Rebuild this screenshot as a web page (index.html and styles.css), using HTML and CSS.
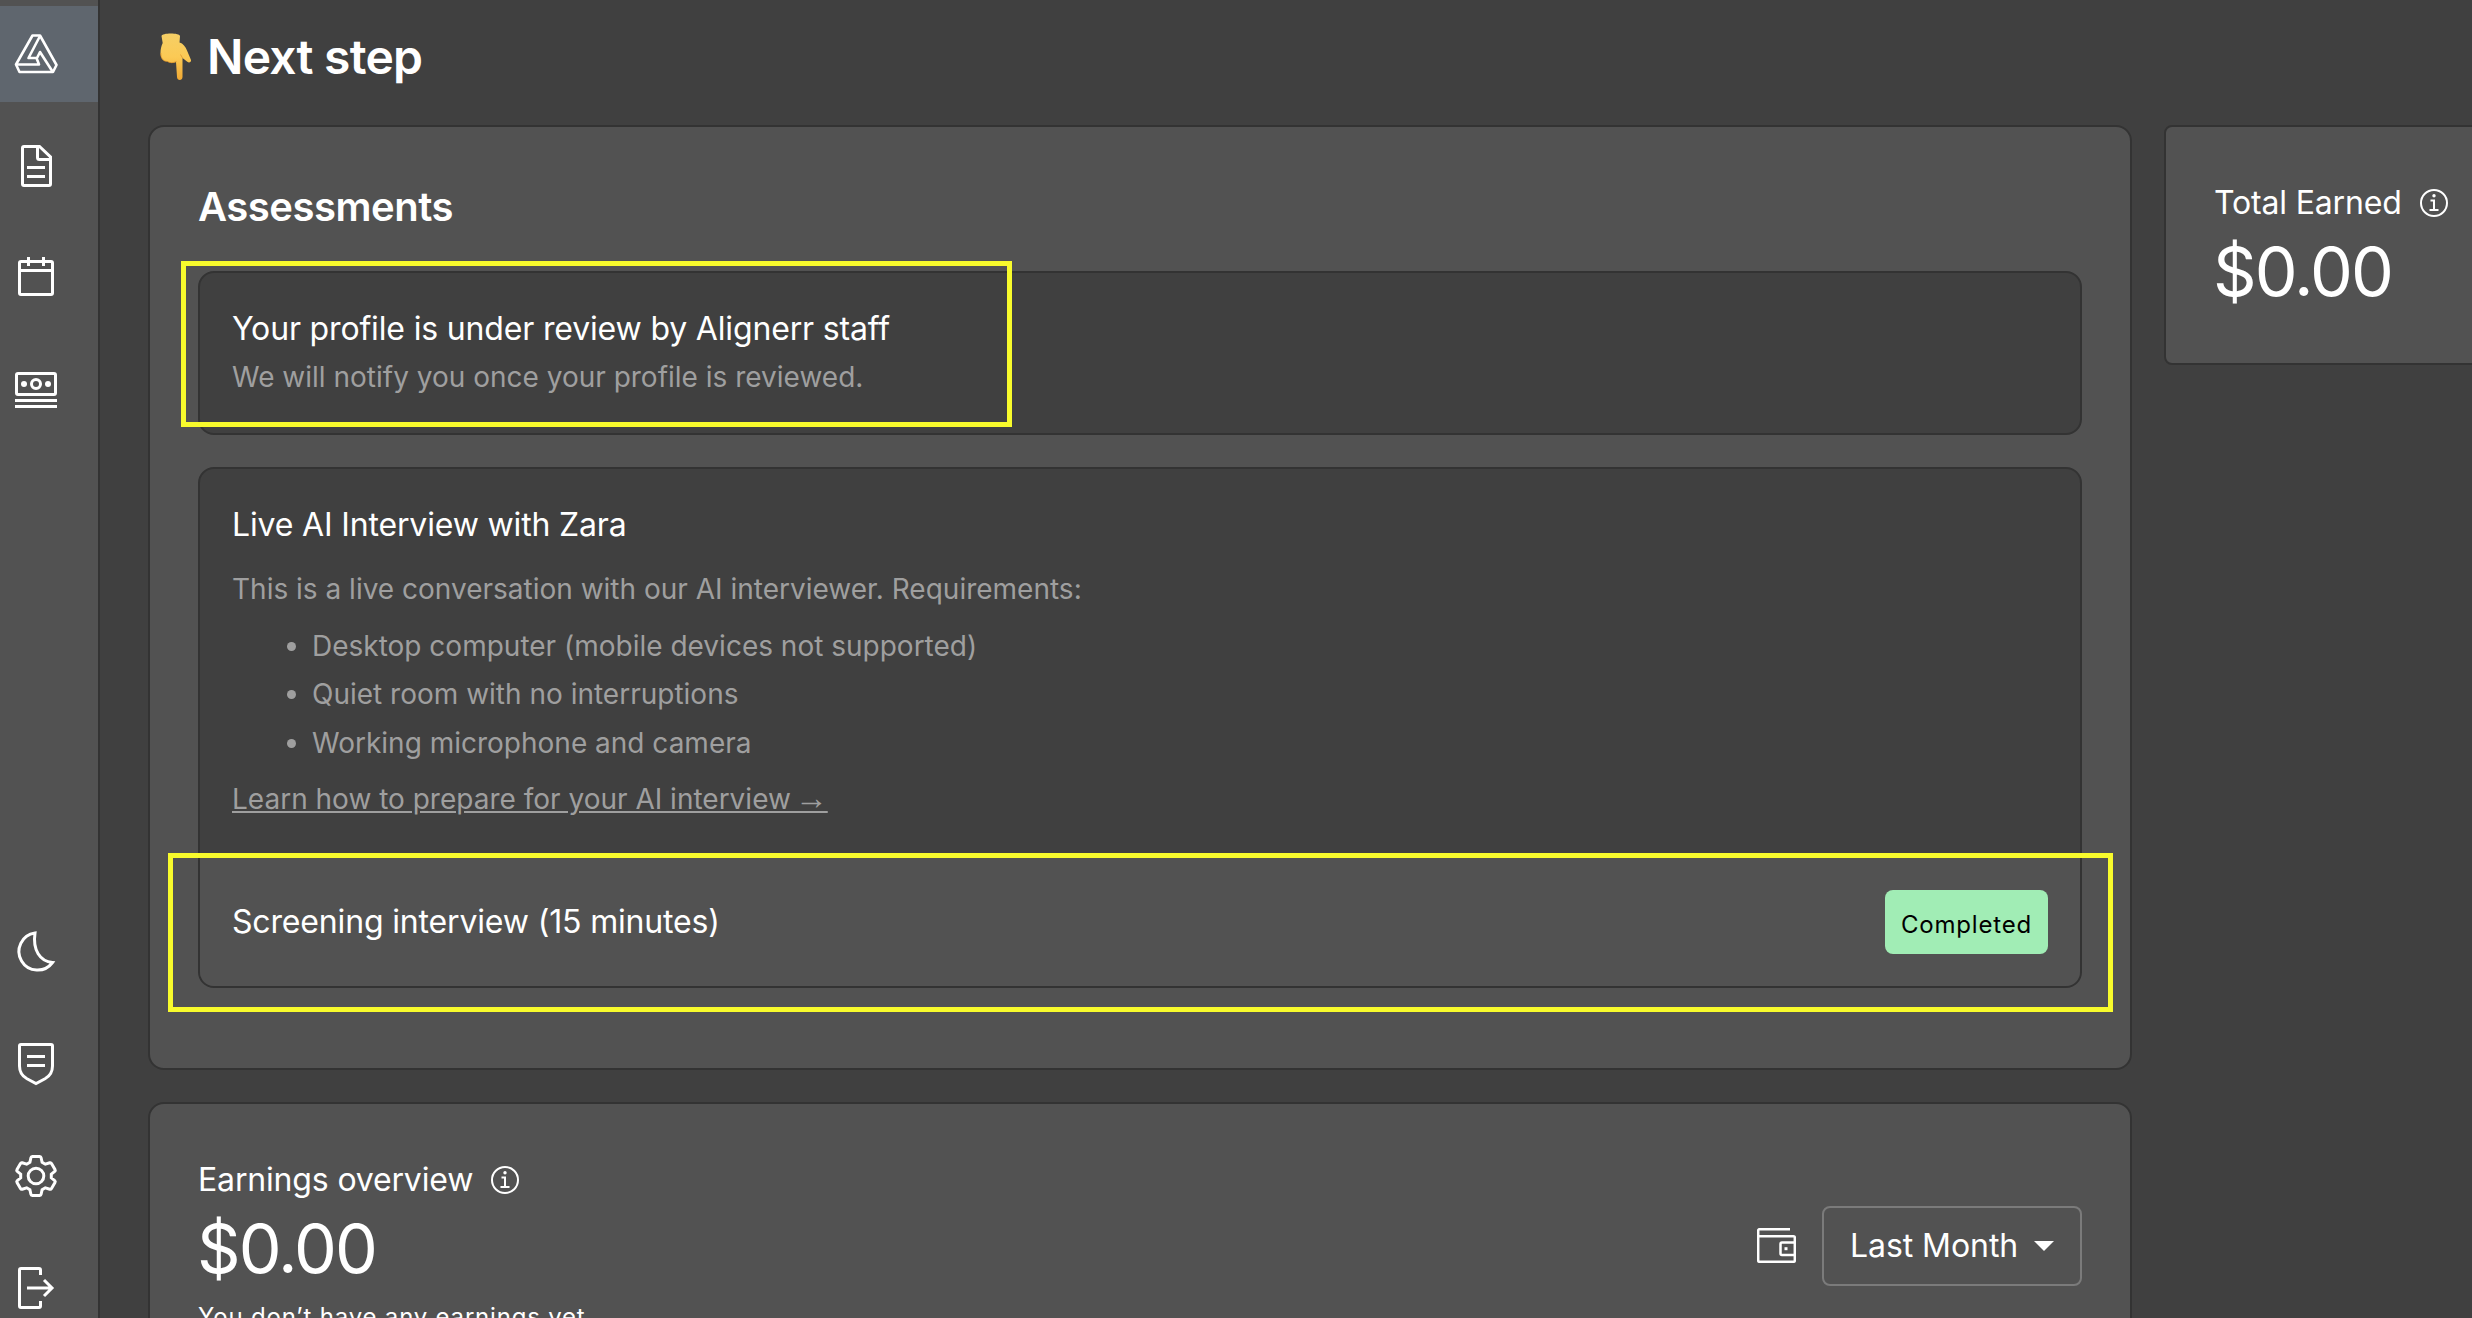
FILE: index.html
```
<!DOCTYPE html>
<html lang="en">
<head>
    <meta charset="UTF-8">
    <meta name="viewport" content="width=device-width, initial-scale=1.0">
    <title>Dashboard</title>
    <link rel="stylesheet" href="styles.css">
</head>
<body>

    <div class="app">
        <nav class="sidebar">
            <div class="nav-group">
                <a class="nav-item active">
                    <svg class="icon logo" viewBox="0 0 48 48">
                        <path d="M20.500 5.500h7.500L44.500 35l-3.500 7H7.500L4 34.500z" />
                        <path d="M28 6L16.500 28H25l3-6L40.500 41.500M4.500 34.500h22.500l-2.500-6.500" />
                    </svg>
                </a>
                <a class="nav-item">
                    <svg class="icon" viewBox="0 0 48 48">
                        <path d="M12 4.500h15.500l11 10.500v27a1.500 1.500 0 0 1-1.500 1.500H12a1.500 1.500 0 0 1-1.500-1.500V6A1.500 1.500 0 0 1 12 4.500z" />
                        <path d="M25.500 4.500v11a2 2 0 0 0 2 2h11M15 25.500h18M15 34.500h18" />
                    </svg>
                </a>
                <a class="nav-item">
                    <svg class="icon" viewBox="0 0 48 48">
                        <rect x="7.500" y="7.500" width="33" height="33" rx="1.500" />
                        <path d="M7.500 16.500h33M16.500 3v9M31.500 3v9" />
                    </svg>
                </a>
                <a class="nav-item">
                    <svg class="icon" viewBox="0 0 48 48">
                        <rect x="4.500" y="7.500" width="39" height="21" rx="1.500" />
                        <circle cx="24" cy="18" r="4.500" />
                        <circle class="dot" cx="12" cy="18" r="3" />
                        <circle class="dot" cx="36" cy="18" r="3" />
                        <path d="M3 34.500h42M3 40.500h42" />
                    </svg>
                </a>
            </div>
            <div class="nav-group">
                <a class="nav-item">
                    <svg class="icon" viewBox="0 0 48 48">
                        <path d="M23 5A18.600 18.600 0 1 0 40.500 34.500C28 33.500 20.500 22 23 5z" />
                    </svg>
                </a>
                <a class="nav-item">
                    <svg class="icon" viewBox="0 0 48 48">
                        <path d="M9 4.500h30A1.500 1.500 0 0 1 40.500 6v20c0 6-2.500 10-7.500 12.800L24 43.500l-9-4.700C10 36 7.500 32 7.500 26V6A1.500 1.500 0 0 1 9 4.500z" />
                        <path d="M15 16.500h18M15 25.500h18" />
                    </svg>
                </a>
                <a class="nav-item">
                    <svg class="icon" viewBox="0 0 48 48">
                        <circle cx="24" cy="24" r="7.800" />
                        <path d="M20.300 4.500h7.400a1.500 1.500 0 0 1 1.400 1.200l1 4.600 3.200 1.900 4.500-1.400a1.500 1.500 0 0 1 1.700.7l3.500 6a1.500 1.500 0 0 1-.3 1.900l-3.400 2.700v3.800l3.400 2.700a1.500 1.500 0 0 1 .3 1.900l-3.500 6a1.500 1.500 0 0 1-1.700.7l-4.500-1.400-3.200 1.900-1 4.600a1.500 1.500 0 0 1-1.400 1.200h-7.400a1.500 1.500 0 0 1-1.400-1.200l-1-4.600-3.200-1.900-4.500 1.400a1.500 1.500 0 0 1-1.700-.7l-3.500-6a1.500 1.500 0 0 1 .3-1.900l3.400-2.700v-3.800l-3.400-2.700a1.500 1.500 0 0 1-.3-1.900l3.500-6a1.500 1.500 0 0 1 1.700-.7l4.500 1.400 3.200-1.900 1-4.600a1.500 1.500 0 0 1 1.400-1.200z" />
                    </svg>
                </a>
                <a class="nav-item">
                    <svg class="icon" viewBox="0 0 48 48">
                        <path d="M28.500 11V6A1.500 1.500 0 0 0 27 4.500H9A1.500 1.500 0 0 0 7.500 6v36A1.500 1.500 0 0 0 9 43.500h18a1.500 1.500 0 0 0 1.500-1.500v-5" />
                        <path d="M15 24h25M32 16l8 8-8 8" />
                    </svg>
                </a>
            </div>
        </nav>

        <main class="main">
            <h1 class="page-title">
                <svg class="hand" viewBox="0 0 32 48">
                    <defs>
                        <linearGradient id="skin" x1="0" y1="0" x2="0" y2="1">
                            <stop offset="0" stop-color="#f5cf66" />
                            <stop offset="0.500" stop-color="#fbca55" />
                            <stop offset="1" stop-color="#f0a833" />
                        </linearGradient>
                    </defs>
                    <path fill="url(#skin)" d="M1.500 3C1.500-.5 20-.5 20 3l-.5 6.500c3.500 1 6 4 7.500 8l3.800 9c1 2.500-1.800 4-3.500 2.200L22.500 25v19c0 4-5.500 4-5.500 0L16 29c-3.500 1.800-7 .8-8.500-.5C3 28.500.5 25 .5 20c0-4 .8-7 2.200-10z" />
                    <path fill="none" stroke="#d98f28" stroke-width="1" opacity="0.700" d="M7.500 28.500C3 28.500.8 25 .8 20M16.500 28.500c-3.500 1.800-7 1.300-9 0M22.500 25l-2-3.500" />
                </svg>
                Next step
            </h1>

            <div class="columns">
                <div class="left-column">
                    <section class="card assessments">
                        <h2 class="card-title">Assessments</h2>

                        <div class="panel review">
                            <p class="body">Your profile is under review by Alignerr staff</p>
                            <p class="muted">We will notify you once your profile is reviewed.</p>
                            <div class="highlight highlight-review"></div>
                        </div>

                        <div class="panel interview">
                            <div class="interview-info">
                                <p class="body">Live AI Interview with Zara</p>
                                <p class="muted intro">This is a live conversation with our AI interviewer. Requirements:</p>
                                <ul class="muted requirements">
                                    <li>Desktop computer (mobile devices not supported)</li>
                                    <li>Quiet room with no interruptions</li>
                                    <li>Working microphone and camera</li>
                                </ul>
                                <a class="muted learn-link">Learn how to prepare for your AI interview <span class="link-arrow">→</span></a>
                            </div>
                            <div class="interview-row">
                                <p class="body">Screening interview (15 minutes)</p>
                                <span class="chip">Completed</span>
                                <div class="highlight highlight-screening"></div>
                            </div>
                        </div>
                    </section>

                    <section class="card earnings">
                        <div class="earnings-head">
                            <div>
                                <p class="body with-info">
                                    Earnings overview
                                    <svg class="info" viewBox="0 0 28 28">
                                        <circle cx="14" cy="14" r="13" />
                                        <path d="M10.500 11.500H14V21M9.500 21h9" />
                                        <circle class="dot" cx="14" cy="6.800" r="1.700" />
                                    </svg>
                                </p>
                                <p class="amount">$0.00</p>
                            </div>
                            <div class="earnings-actions">
                                <svg class="wallet" viewBox="0 0 39 35">
                                    <path d="M33 1.200H2.500a1.300 1.300 0 0 0-1.300 1.300v30a1.300 1.300 0 0 0 1.300 1.300h34a1.300 1.300 0 0 0 1.300-1.300V9.500a1.300 1.300 0 0 0-1.300-1.300H1.200" />
                                    <path d="M37.800 14.500H25a1.500 1.500 0 0 0-1.500 1.500v9.500A1.500 1.500 0 0 0 25 27h12.800" />
                                    <rect class="dot" x="27.500" y="19.200" width="3" height="3" />
                                </svg>
                                <div class="select">
                                    Last Month
                                    <svg class="arrow" viewBox="0 0 20 10"><path d="M0 0h20L10 10z" /></svg>
                                </div>
                            </div>
                        </div>
                        <p class="caption">You don’t have any earnings yet</p>
                    </section>
                </div>

                <aside class="card total">
                    <p class="body with-info">
                        Total Earned
                        <svg class="info" viewBox="0 0 28 28">
                            <circle cx="14" cy="14" r="13" />
                            <path d="M10.500 11.500H14V21M9.500 21h9" />
                            <circle class="dot" cx="14" cy="6.800" r="1.700" />
                        </svg>
                    </p>
                    <p class="amount">$0.00</p>
                </aside>
            </div>
        </main>
    </div>

</body>
</html>
```
FILE: styles.css
```
* { box-sizing: border-box; margin: 0; padding: 0; }
body { background: #404040; color: #fff; font-family: Inter, "Liberation Sans", sans-serif; overflow: hidden; }
.app { display: flex; height: 1318px; overflow: hidden; }

/* sidebar */
.sidebar { display: flex; flex-direction: column; justify-content: space-between; flex: none; width: 100px; height: 1336px; padding-top: 6px; background: #525252; border-right: 2px solid #333; }
.nav-group { display: flex; flex-direction: column; gap: 16px; }
.nav-item { display: flex; align-items: center; height: 96px; padding-left: 12px; }
.nav-item.active { background: #5f666e; }
.icon { width: 48px; height: 48px; fill: none; stroke: #fff; stroke-width: 3; }
.logo { stroke-width: 2.6; stroke-linejoin: round; }
.dot { fill: #fff; stroke: none; }

/* text */
.page-title { display: flex; align-items: center; gap: 15px; height: 64px; padding-left: 12px; font-size: 48px; font-weight: 600; line-height: 64px; letter-spacing: -0.016em; }
.hand { width: 32px; height: 48px; }
.card-title { font-size: 40px; font-weight: 600; line-height: 64px; letter-spacing: -0.012em; }
.body { font-size: 32px; line-height: 48px; letter-spacing: -0.005em; }
.muted { font-size: 28px; line-height: 40px; letter-spacing: 0; color: #9f9f9f; }
.amount { margin: 2px 0 0 -1px; font-size: 68px; line-height: 84px; letter-spacing: -0.028em; }
.caption { margin-top: 7px; font-size: 24px; line-height: 40px; letter-spacing: 0.03333em; }

/* layout */
.main { flex: 1; min-width: 0; padding: 25px 0 0 48px; }
.columns { display: flex; align-items: flex-start; gap: 32px; margin-top: 36px; }
.left-column { display: flex; flex-direction: column; flex: none; gap: 32px; width: 1984px; }
.card { background: #525252; border: 2px solid #333; border-radius: 16px; padding: 48px; }
.assessments { height: 945px; }
.panel { position: relative; background: #404040; border: 2px solid #333; border-radius: 16px; }
.review { height: 164px; margin-top: 32px; padding: 32px; }
.review .muted { margin-top: 4px; }
.interview { height: 521px; margin-top: 32px; }
.interview-info { height: 388px; padding: 32px 32px 0; }
.intro { margin-top: 20px; }
.requirements { margin-top: 17px; padding-left: 80px; }
.requirements li { height: 40px; margin-top: 8px; }
.requirements li:last-child { margin-top: 9px; }
.learn-link { display: inline-block; margin-top: 16px; text-decoration: underline; }
.link-arrow { margin-left: -4px; font-family: "Liberation Sans", sans-serif; font-size: 33px; line-height: 0; }
.interview-row { position: relative; display: flex; align-items: center; justify-content: space-between; height: 129px; padding: 0 32px; background: #525252; border-radius: 0 0 14px 14px; }
.chip { width: 163px; height: 64px; border-radius: 8px; background: #a1edb5; color: #000; font-size: 24px; line-height: 69px; letter-spacing: 0.03333em; text-align: center; }

/* yellow callout frames lying over the panels */
.highlight { position: absolute; border: 5px solid #f8fb2c; }
.highlight-review { top: -12px; left: -19px; width: 831px; height: 166px; }
.highlight-screening { top: -4px; left: -32px; width: 1945px; height: 159px; }

/* earnings */
.earnings { height: 400px; padding-top: 52px; }
.earnings-head { display: flex; justify-content: space-between; }
.with-info { display: flex; align-items: center; gap: 18px; }
.info { width: 28px; height: 28px; fill: none; stroke: #fff; stroke-width: 2; }
.earnings-actions { display: flex; align-items: center; gap: 26px; margin-top: 50px; height: 80px; }
.wallet { width: 39px; height: 35px; margin-bottom: 2px; fill: none; stroke: #fff; stroke-width: 2.5; }
.select { display: flex; align-items: center; justify-content: space-between; width: 260px; height: 80px; padding: 0 26px 1px; border: 2px solid #7b7b7b; border-radius: 8px; font-size: 32px; letter-spacing: -0.002em; }
.arrow { width: 20px; height: 10px; fill: #fff; }
.total { flex: none; width: 600px; height: 240px; padding-top: 52px; border-radius: 8px; }
```
